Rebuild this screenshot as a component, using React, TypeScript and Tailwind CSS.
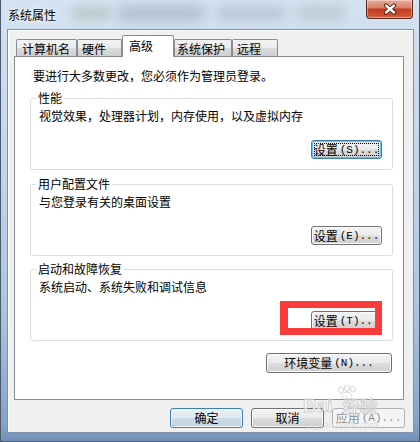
import React from "react";

const CJK = "font-['Noto_Sans_CJK_SC',sans-serif]";
const MONO = "font-['Liberation_Mono',monospace]";

function Hot({ k }: { k: string }) {
  return <span className={`${MONO} text-[11px] ml-[2px]`}>({k})...</span>;
}

function Btn({
  w,
  h,
  kind = "normal",
  children,
}: {
  w: string;
  h: string;
  kind?: "normal" | "focus" | "default" | "disabled";
  children: React.ReactNode;
}) {
  const base =
    "relative flex items-center justify-center whitespace-nowrap rounded-[3px] border leading-[12px] text-[12px]";
  let style = "";
  if (kind === "normal")
    style =
      "border-[#707070] text-black bg-[linear-gradient(180deg,#f2f2f2_0%,#ebebeb_48%,#dddddd_52%,#cfcfcf_100%)] shadow-[inset_0_0_0_1px_#fbfbfb]";
  if (kind === "focus")
    style =
      "border-[#3c7fb1] text-black bg-[linear-gradient(180deg,#f2f2f2_0%,#ebebeb_48%,#dddddd_52%,#cfcfcf_100%)] shadow-[inset_0_0_0_1px_#54c6f3]";
  if (kind === "default")
    style =
      "border-[#3c7fb1] text-black bg-[linear-gradient(180deg,#e9f1f7_0%,#dfe9f1_48%,#cddbe6_52%,#c1d3e1_100%)] shadow-[inset_0_0_0_1px_#f4f8fb]";
  if (kind === "disabled")
    style = "border-[#adb2b5] text-[#8d8d8d] bg-[#f4f4f4]";
  return (
    <div className={`${base} ${style} ${w} ${h}`}>
      {kind === "focus" && (
        <div className="absolute inset-[2px] border border-dotted border-black" />
      )}
      {children}
    </div>
  );
}

function Group({
  label,
  desc,
  btn,
  mt,
  overlay,
}: {
  label: string;
  desc: string;
  btn: React.ReactNode;
  mt: string;
  overlay?: React.ReactNode;
}) {
  return (
    <div
      className={`relative ${mt} w-[363px] h-[72px] rounded-[3px] border border-[#d5dfe5] flex flex-col`}
    >
      <div className="absolute left-[5px] top-[-7px] px-[2px] bg-white leading-[12px] text-[12px]">
        {label}
      </div>
      <div className="ml-[8px] mt-[11px] leading-[12px] h-[12px] text-[12px]">{desc}</div>
      <div className="self-end mr-[10px] mt-[18px]">{btn}</div>
      {overlay}
    </div>
  );
}

function Tab({
  w,
  pl,
  label,
  selected,
}: {
  w: string;
  pl: string;
  label: string;
  selected?: boolean;
}) {
  if (selected)
    return (
      <div
        className={`relative z-10 ${w} h-[22px] mb-[-1px] bg-white border-x border-t border-[#898c95] ${pl} pt-[4px] leading-[12px] text-[12px] rounded-t-[2px]`}
      >
        {label}
      </div>
    );
  return (
    <div
      className={`${w} h-[17px] border-x border-t border-[#898c95] bg-[linear-gradient(180deg,#f3f3f3_0%,#ebebeb_50%,#dddddd_50%,#cfcfcf_100%)] ${pl} pt-[3px] leading-[12px] text-[12px] rounded-t-[2px]`}
    >
      {label}
    </div>
  );
}

export default function App() {
  return (
    <div
      className={`${CJK} relative w-[420px] h-[442px] overflow-hidden border-x border-b border-[#4a5a6c] bg-[linear-gradient(180deg,#d4e2f1_0%,#c3d6eb_35%,#adc5e0_70%,#86a3c8_96%,#7290b8_100%)] text-black`}
    >
      {/* title bar */}
      <div className="relative h-[29px]">
        <div className="absolute left-[70px] top-[6px] w-[40px] h-[14px] rounded-full bg-[#8aa07a] opacity-30 blur-[5px]" />
        <div className="absolute left-[115px] top-[5px] w-[90px] h-[16px] rounded-full bg-[#6d7a88] opacity-30 blur-[6px]" />
        <div className="absolute left-[215px] top-[6px] w-[70px] h-[14px] rounded-full bg-[#6d7a88] opacity-25 blur-[6px]" />
        <div className="absolute left-[295px] top-[6px] w-[50px] h-[14px] rounded-full bg-[#7d8a7a] opacity-25 blur-[6px]" />
        <div className="relative pl-[7px] pt-[8px] leading-[13px] text-[12px] [text-shadow:0_0_6px_#fff,0_0_3px_#fff]">
          系统属性
        </div>
        <div className="absolute right-[6px] top-0 w-[47px] h-[19px] rounded-b-[4px] border border-t-0 border-[#5a2720] bg-[linear-gradient(180deg,#e9ab9c_0%,#d88269_42%,#c23c22_52%,#c9512f_85%,#d9704c_100%)] shadow-[inset_0_0_0_1px_rgba(255,255,255,0.35)] flex items-center justify-center">
          <svg width="16" height="12" viewBox="0 0 16 12">
            <path d="M4 2.5 L12 9.5 M12 2.5 L4 9.5" stroke="#4a1a12" strokeWidth="4.2" strokeLinecap="round" />
            <path d="M4 2.5 L12 9.5 M12 2.5 L4 9.5" stroke="#ffffff" strokeWidth="2.4" strokeLinecap="round" />
          </svg>
        </div>
      </div>

      {/* client area */}
      <div className="ml-[6px] w-[407px] h-[404px] bg-[#f0f0f0] border border-[#7d90a7] shadow-[inset_1px_1px_0_#ffffff] flex flex-col">
        {/* tabs */}
        <div className="mt-[5px] ml-[8px] h-[21px] flex items-end">
          <Tab w="w-[61px]" pl="pl-[5px]" label="计算机名" />
          <Tab w="w-[45px]" pl="pl-[4px]" label="硬件" />
          <Tab w="w-[52px]" pl="pl-[6px]" label="高级" selected />
          <Tab w="w-[58px]" pl="pl-[2px]" label="系统保护" />
          <Tab w="w-[46px]" pl="pl-[4px]" label="远程" />
        </div>
        {/* panel */}
        <div className="ml-[6px] w-[390px] h-[344px] bg-white border border-[#898c95] flex flex-col pl-[15px]">
          <div className="ml-[3px] mt-[13px] h-[12px] leading-[12px] text-[12px]">
            要进行大多数更改，您必须作为管理员登录。
          </div>
          <Group
            mt="mt-[16px]"
            label="性能"
            desc="视觉效果，处理器计划，内存使用，以及虚拟内存"
            btn={
              <Btn w="w-[71px]" h="h-[19px]" kind="focus">
                设置<Hot k="S" />
              </Btn>
            }
          />
          <Group
            mt="mt-[14px]"
            label="用户配置文件"
            desc="与您登录有关的桌面设置"
            btn={
              <Btn w="w-[71px]" h="h-[19px]">
                设置<Hot k="E" />
              </Btn>
            }
          />
          <Group
            mt="mt-[13px]"
            label="启动和故障恢复"
            desc="系统启动、系统失败和调试信息"
            btn={
              <Btn w="w-[71px]" h="h-[19px]">
                设置<Hot k="T" />
              </Btn>
            }
            overlay={
              <div className="absolute left-[249px] top-[31px] w-[102px] h-[34px] border-[7px] border-l-[8px] border-[#fc3b3b]" />
            }
          />
          <div className="self-end mr-[11px] mt-[12px]">
            <Btn w="w-[126px]" h="h-[20px]">
              环境变量<Hot k="N" />
            </Btn>
          </div>
        </div>
        {/* bottom buttons */}
        <div className="mt-[8px] flex justify-end gap-[8px] pr-[8px]">
          <Btn w="w-[73px]" h="h-[20px]" kind="default">
            确定
          </Btn>
          <Btn w="w-[73px]" h="h-[20px]">
            取消
          </Btn>
          <Btn w="w-[73px]" h="h-[20px]" kind="disabled">
            应用<Hot k="A" />
          </Btn>
        </div>
      </div>

      {/* baidu watermark */}
      <div className="pointer-events-none absolute left-[300px] top-[382px] w-[100px] h-[56px] opacity-70">
        <svg className="absolute left-[34px] top-[3px]" width="26" height="16" viewBox="0 0 26 16">
          <g fill="#ffffff" stroke="#c4c4c4" strokeWidth="1">
            <ellipse cx="6" cy="5" rx="2.5" ry="3" />
            <ellipse cx="12" cy="3" rx="2.5" ry="3" />
            <ellipse cx="18" cy="4" rx="2.5" ry="3" />
            <ellipse cx="12" cy="11" rx="5" ry="4" />
          </g>
        </svg>
        <div className="absolute left-[2px] top-[14px] font-['Liberation_Sans',sans-serif] font-bold text-[19px] leading-[20px] text-white [-webkit-text-stroke:1px_#c2c2c2]">
          Bai
        </div>
        <div className="absolute left-[42px] top-[14px] text-[17px] leading-[20px] font-bold text-white [-webkit-text-stroke:1px_#c2c2c2]">
          经验
        </div>
        <div className="absolute left-[4px] top-[38px] font-['Liberation_Sans',sans-serif] text-[9px] leading-[10px] text-[#d0d0d0]">
          jingyan.baidu.com
        </div>
      </div>
    </div>
  );
}
